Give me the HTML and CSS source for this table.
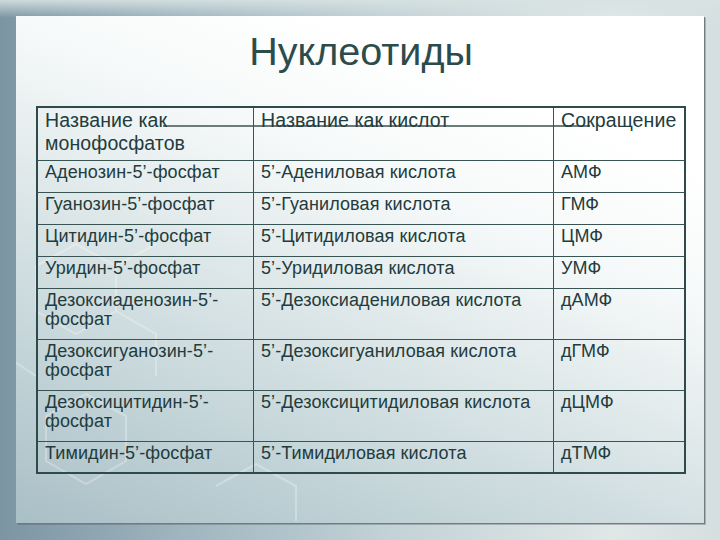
FILE: index.html
```html
<!DOCTYPE html>
<html lang="ru">
<head>
<meta charset="utf-8">
<title>Нуклеотиды</title>
<link rel="stylesheet" href="styles.css">
</head>
<body>
<div class="slide">
  <svg class="watermark" width="688" height="507" viewBox="0 0 688 507">
    <g fill="none" stroke="#ffffff" stroke-opacity="0.28" stroke-width="2">
      <path d="M20 250 L60 228 L100 250 L100 295 L60 318 L20 295 Z"/>
      <path d="M100 250 L140 228 M100 295 L140 318 L140 360"/>
      <path d="M30 400 L70 378 L110 400 L110 445 L70 468 L30 445 Z"/>
      <path d="M200 470 L240 448 L280 470 L280 505"/>
      <path d="M-10 340 L20 360"/>
    </g>
  </svg>
  <h1 class="title">Нуклеотиды</h1>
  <div class="table-wrap">
    <div class="header-line"></div>
    <table class="nt">
      <colgroup>
        <col class="c1"><col class="c2"><col class="c3">
      </colgroup>
      <tr class="head">
        <td>Название как монофосфатов</td>
        <td>Название как кислот</td>
        <td>Сокращение</td>
      </tr>
      <tr><td>Аденозин-5’-фосфат</td><td>5’-Адениловая кислота</td><td>АМФ</td></tr>
      <tr><td>Гуанозин-5’-фосфат</td><td>5’-Гуаниловая кислота</td><td>ГМФ</td></tr>
      <tr><td>Цитидин-5’-фосфат</td><td>5’-Цитидиловая кислота</td><td>ЦМФ</td></tr>
      <tr><td>Уридин-5’-фосфат</td><td>5’-Уридиловая кислота</td><td>УМФ</td></tr>
      <tr><td>Дезоксиаденозин-5’-фосфат</td><td>5’-Дезоксиадениловая кислота</td><td>дАМФ</td></tr>
      <tr><td>Дезоксигуанозин-5’-фосфат</td><td>5’-Дезоксигуаниловая кислота</td><td>дГМФ</td></tr>
      <tr><td>Дезоксицитидин-5’-фосфат</td><td>5’-Дезоксицитидиловая кислота</td><td>дЦМФ</td></tr>
      <tr class="last"><td>Тимидин-5’-фосфат</td><td>5’-Тимидиловая кислота</td><td>дТМФ</td></tr>
    </table>
  </div>
</div>
</body>
</html>
```
FILE: styles.css
```css
html, body {
  margin: 0;
  padding: 0;
}
body {
  width: 720px;
  height: 540px;
  overflow: hidden;
  background:
    linear-gradient(to bottom, rgba(215,226,226,0.9) 0px, rgba(215,226,226,0) 18px),
    linear-gradient(to right, #7b95a3 0%, #9fb5bf 25%, #c4d3d7 55%, #dfe7e7 85%, #d6dfe0 100%);
  padding: 16px 16px 17px 16px;
  box-sizing: border-box;
  font-family: "Liberation Sans", Arial, sans-serif;
}
.slide {
  position: relative;
  height: 507px;
  box-sizing: border-box;
  padding: 13px 18px 0 20px;
  background: linear-gradient(22deg, #a9bfc6 0%, #c3d4d8 22%, #e0e9ea 45%, #f6f9f9 63%, #ffffff 80%);
  box-shadow: 1px 1px 0 #6f7c80, 2px 2px 0 rgba(80,90,95,0.35);
}
.watermark {
  position: absolute;
  left: 0;
  top: 0;
  pointer-events: none;
}
.title {
  position: relative;
  margin: 0;
  font-weight: normal;
  font-size: 39.5px;
  line-height: 45px;
  color: #2c4c4c;
  text-align: center;
}
.table-wrap {
  position: relative;
  margin-top: 32px;
  width: 650px;
}
.header-line {
  position: absolute;
  left: 127px;
  top: 19px;
  width: 427px;
  height: 2px;
  background: #6e7b7b;
}
.nt {
  position: relative;
  width: 650px;
  border-collapse: separate;
  border-spacing: 0;
  border: 2px solid #2f4a4a;
  table-layout: fixed;
  color: #223c3d;
  font-size: 18px;
  line-height: 19px;
}
.c1 { width: 216px; }
.c2 { width: 300px; }
.c3 { width: 130px; }
.nt td {
  vertical-align: top;
  padding: 2px 7px 10px 7px;
  border-right: 1px solid #3a5454;
  border-bottom: 1px solid #3a5454;
  letter-spacing: 0.1px;
}
.nt td:last-child {
  border-right: none;
}
.nt tr.head td {
  font-size: 19.5px;
  line-height: 23px;
  padding: 1px 7px 5px 7px;
}
.nt tr.last td {
  border-bottom: none;
  padding-bottom: 9px;
}
```
